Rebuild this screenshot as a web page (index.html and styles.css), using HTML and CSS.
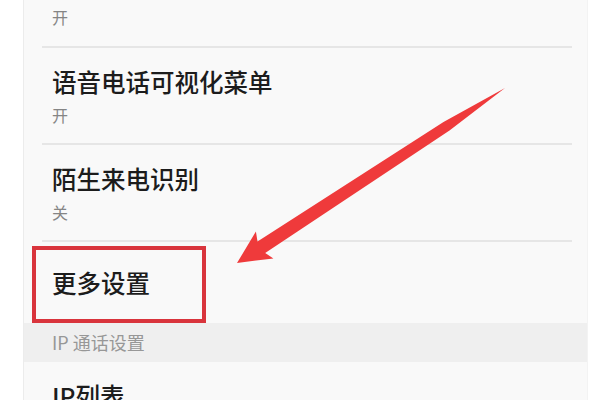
FILE: index.html
```html
<!DOCTYPE html>
<html lang="zh-CN">
<head>
<meta charset="utf-8">
<title>设置</title>
<link rel="stylesheet" href="styles.css">
</head>
<body>
<div class="screen">
  <div class="item item-partial"><div class="sub">开</div></div>
  <div class="divider"></div>
  <div class="item item-double"><div class="title">语音电话可视化菜单</div><div class="sub">开</div></div>
  <div class="divider"></div>
  <div class="item item-double"><div class="title">陌生来电识别</div><div class="sub">关</div></div>
  <div class="divider"></div>
  <div class="item item-single"><div class="title">更多设置</div></div>
  <div class="section">IP 通话设置</div>
  <div class="item item-last"><div class="title">IP列表</div></div>
</div>
<div class="highlight"></div>
<svg class="arrow" viewBox="0 0 600 400" width="600" height="400" aria-hidden="true">
  <polygon points="237,263 255.9,231.6 257.5,241.5 443.5,122 505,88 449.5,130.5 265.2,253 273.4,258.4" fill="#ef3a3b"/>
</svg>
</body>
</html>
```
FILE: styles.css
```css
html, body {
  margin: 0;
  padding: 0;
}
body {
  width: 600px;
  height: 400px;
  overflow: hidden;
  position: relative;
  background: #ffffff;
  font-family: "Noto Sans CJK SC", "Noto Sans", sans-serif;
}
.screen {
  margin-left: 23px;
  width: 565px;
  height: 400px;
  box-sizing: border-box;
  background: #f9f9f9;
  border-left: 1px solid #ececec;
  border-right: 1px solid #f3f3f3;
  display: flex;
  flex-direction: column;
  overflow: hidden;
}
.item {
  box-sizing: border-box;
  padding-left: 28px;
  flex: none;
}
.item-partial {
  height: 46px;
  padding-top: 7px;
}
.item-double {
  height: 95px;
  padding-top: 20px;
}
.item-single {
  height: 81px;
  display: flex;
  align-items: center;
}
.item-last {
  padding-top: 20px;
}
.title {
  font-size: 24.5px;
  line-height: 28px;
  font-weight: 500;
  color: #1c1c1c;
  white-space: nowrap;
}
.sub {
  font-size: 16px;
  line-height: 20px;
  color: #858585;
}
.item-double .sub {
  margin-top: 9px;
}
.divider {
  flex: none;
  height: 2px;
  margin-left: 18px;
  margin-right: 15px;
  background: #e6e6e6;
}
.section {
  flex: none;
  height: 39px;
  line-height: 39px;
  padding-left: 28px;
  background: #efefef;
  color: #979797;
  font-size: 18px;
}
.highlight {
  position: absolute;
  left: 32px;
  top: 246px;
  width: 174px;
  height: 77px;
  box-sizing: border-box;
  border: 4px solid #d9343c;
}
.arrow {
  position: absolute;
  left: 0;
  top: 0;
  pointer-events: none;
}
```
